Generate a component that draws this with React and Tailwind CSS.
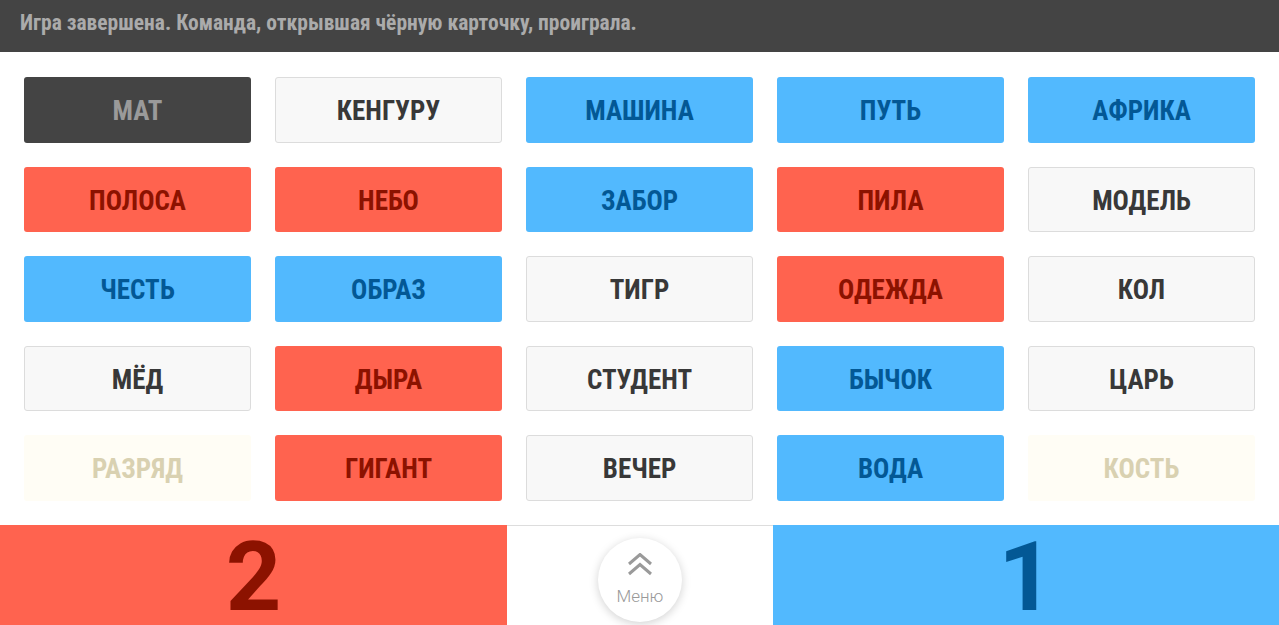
/* Board data */

const cards = [
  ["МАТ", "black"],
  ["КЕНГУРУ", "neutral"],
  ["МАШИНА", "blue"],
  ["ПУТЬ", "blue"],
  ["АФРИКА", "blue"],
  ["ПОЛОСА", "red"],
  ["НЕБО", "red"],
  ["ЗАБОР", "blue"],
  ["ПИЛА", "red"],
  ["МОДЕЛЬ", "neutral"],
  ["ЧЕСТЬ", "blue"],
  ["ОБРАЗ", "blue"],
  ["ТИГР", "neutral"],
  ["ОДЕЖДА", "red"],
  ["КОЛ", "neutral"],
  ["МЁД", "neutral"],
  ["ДЫРА", "red"],
  ["СТУДЕНТ", "neutral"],
  ["БЫЧОК", "blue"],
  ["ЦАРЬ", "neutral"],
  ["РАЗРЯД", "faded"],
  ["ГИГАНТ", "red"],
  ["ВЕЧЕР", "neutral"],
  ["ВОДА", "blue"],
  ["КОСТЬ", "faded"],
];

const styles = {
  black: "bg-[#444444] text-[#9a9a9a]",
  neutral: "bg-[#f8f8f8] border border-[#dcdcdc] text-[#383838]",
  blue: "bg-[#52b9fe] text-[#035895]",
  red: "bg-[#ff634f] text-[#8c1200]",
  faded: "bg-[#fffdf5] text-[#d9d1b1]",
};

const font = {
  fontFamily: '"Roboto Condensed", Roboto, sans-serif',
};

// double chevron used on the menu button
function DoubleChevron() {
  return (
    <svg width="26" height="23" viewBox="0 0 26 23" fill="none">
      <polyline points="2,11 13,1.5 24,11" stroke="#9a9a9a" strokeWidth="3" />
      <polyline points="2,21 13,11.5 24,21" stroke="#9a9a9a" strokeWidth="3" />
    </svg>
  );
}

export default function App() {
  return (
    <div className="h-[625px] w-[1279px] flex flex-col bg-white overflow-hidden" style={font}>
      {/* Status bar */}
      <div className="h-[52px] shrink-0 bg-[#444444] flex items-center px-5 pb-[6px]">
        <p className="text-[21.5px] leading-none font-bold text-[#ababab]">
          Игра завершена. Команда, открывшая чёрную карточку, проиграла.
        </p>
      </div>

      {/* Board */}
      <div className="flex-1 grid grid-cols-5 grid-rows-5 gap-6 p-6 pt-[25px]">
        {cards.map(([word, kind]) => (
          <div
            key={word}
            className={`rounded-[3px] flex items-center justify-center pt-[3px] text-[27px] font-bold uppercase ${styles[kind]}`}
          >
            {word}
          </div>
        ))}
      </div>

      {/* Score bar */}
      <div className="h-[100px] shrink-0 flex">
        <div className="w-[507px] bg-[#ff634f] flex justify-center pt-[6px]">
          <span
            className="text-[97px] font-bold text-[#8c1200] leading-[92px]"
            style={{ fontFamily: "Roboto, sans-serif" }}
          >
            2
          </span>
        </div>
        <div className="w-[266px] border-t border-[#dddddd] flex justify-center pt-[12px]">
          <div className="w-[84px] h-[84px] rounded-full bg-white shadow-[0_2px_10px_rgba(0,0,0,0.18)] flex flex-col items-center pt-[15px]">
            <DoubleChevron />
            <span
              className="text-[17px] font-light text-[#999999] leading-none mt-[12px]"
              style={{ fontFamily: "Roboto, sans-serif" }}
            >
              Меню
            </span>
          </div>
        </div>
        <div className="flex-1 bg-[#52b9fe] flex justify-center pt-[6px]">
          <span
            className="text-[97px] font-bold text-[#035895] leading-[92px]"
            style={{ fontFamily: "Roboto, sans-serif" }}
          >
            1
          </span>
        </div>
      </div>
    </div>
  );
}
